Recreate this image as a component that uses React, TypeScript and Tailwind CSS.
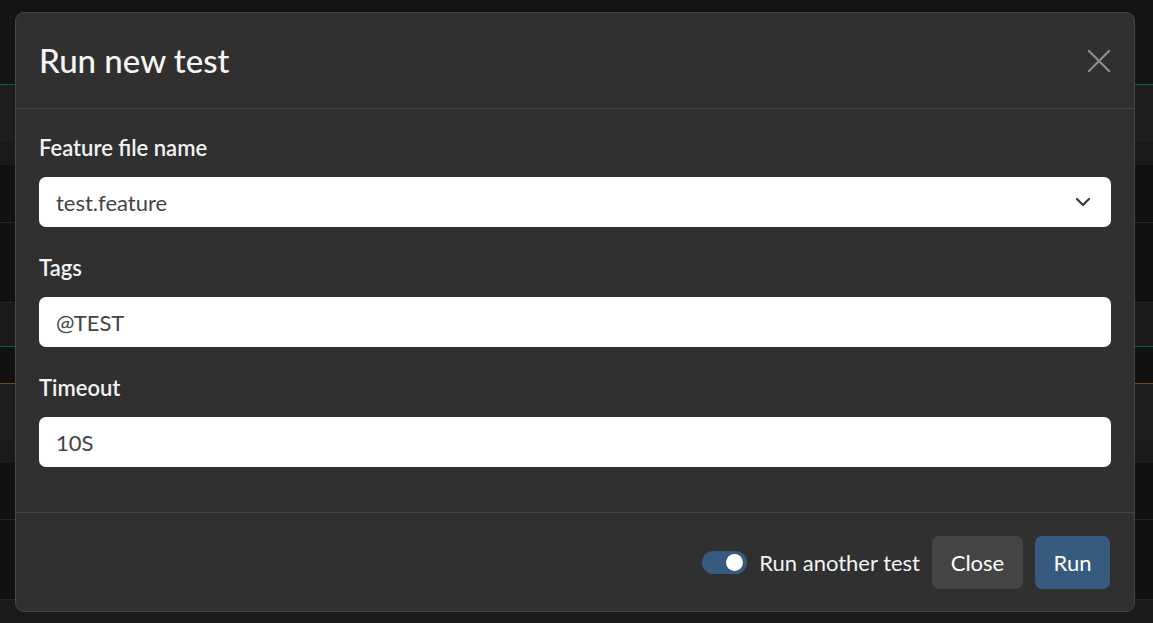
import React from "react";

const rows: { h: number; bg: string; border?: string }[] = [
  { h: 85, bg: "bg-[#141414]", border: "border-b border-[#0f5e47]" },
  { h: 57, bg: "bg-[#1e1e1e]" },
  { h: 23, bg: "bg-[#1a1a1a]" },
  { h: 58, bg: "bg-[#111111]", border: "border-b border-[#262626]" },
  { h: 80, bg: "bg-[#111111]", border: "border-b border-[#262626]" },
  { h: 44, bg: "bg-[#1a1a1a]", border: "border-b border-[#0f5e47]" },
  { h: 37, bg: "bg-[#111111]", border: "border-b border-[#6b4e17]" },
  { h: 55, bg: "bg-[#1e1e1e]" },
  { h: 24, bg: "bg-[#1a1a1a]" },
  { h: 57, bg: "bg-[#111111]", border: "border-b border-[#262626]" },
  { h: 80, bg: "bg-[#111111]", border: "border-b border-[#262626]" },
  { h: 23, bg: "bg-[#1a1a1a]" },
];

function Field({ label, children }: { label: string; children: React.ReactNode }) {
  return (
    <div className="flex flex-col">
      <label className="text-[22px] leading-[30px] font-semibold text-[#f2f2f2] mb-[14px]">{label}</label>
      {children}
    </div>
  );
}

export default function App() {
  return (
    <div
      className="relative w-full h-[623px] overflow-hidden bg-[#111111]"
      style={{ fontFamily: "Lato, 'Noto Sans', sans-serif" }}
    >
      <div className="flex flex-col">
        {rows.map((r, i) => (
          <div key={i} className={`${r.bg} ${r.border ?? ""} box-border`} style={{ height: r.h }} />
        ))}
      </div>

      <div className="absolute left-[15px] top-[12px] w-[1120px] h-[600px] rounded-[9px] border border-[#464646] bg-[#303030] flex flex-col text-white">
        <div className="h-[96px] shrink-0 border-b border-[#464646] flex items-center justify-between pl-[23px] pr-[23px]">
          <h1 className="text-[33px] font-medium leading-none text-[#f5f5f5] -mt-[1px]">Run new test</h1>
          <svg width="24" height="24" viewBox="0 0 24 24" className="text-[#8c8c8c]" stroke="currentColor" strokeWidth="2.2" strokeLinecap="square">
            <path d="M2 2 L22 22 M22 2 L2 22" />
          </svg>
        </div>

        <div className="flex-1 flex flex-col gap-[26px] px-[23px] pt-[24px]">
          <Field label="Feature file name">
            <div className="h-[50px] rounded-[7px] bg-white flex items-center justify-between pl-[17px] pr-[20px] text-[22px] text-[#444444]">
              <span>test.feature</span>
              <svg width="16" height="10" viewBox="0 0 16 10" fill="none" stroke="#343a40" strokeWidth="2.2" strokeLinecap="round" strokeLinejoin="round">
                <path d="M2 2 L8 8 L14 2" />
              </svg>
            </div>
          </Field>
          <Field label="Tags">
            <div className="h-[50px] rounded-[7px] bg-white flex items-center pl-[17px] text-[22px] text-[#444444]">@TEST</div>
          </Field>
          <Field label="Timeout">
            <div className="h-[50px] rounded-[7px] bg-white flex items-center pl-[17px] text-[22px] text-[#444444]">10S</div>
          </Field>
        </div>

        <div className="h-[99px] shrink-0 border-t border-[#464646] flex items-center justify-end gap-[12px] pr-[24px] pt-[1px]">
          <div className="flex items-center gap-[12px]">
            <div className="w-[45px] h-[23px] rounded-full bg-[#375a7f] flex items-center justify-end pr-[4px]">
              <div className="w-[17px] h-[17px] rounded-full bg-white" />
            </div>
            <span className="text-[22px] text-[#f2f2f2]">Run another test</span>
          </div>
          <button className="h-[53px] w-[91px] rounded-[7px] bg-[#444444] text-[22px] text-white">Close</button>
          <button className="h-[53px] w-[75px] rounded-[7px] bg-[#375a7f] text-[22px] text-white">Run</button>
        </div>
      </div>
    </div>
  );
}
